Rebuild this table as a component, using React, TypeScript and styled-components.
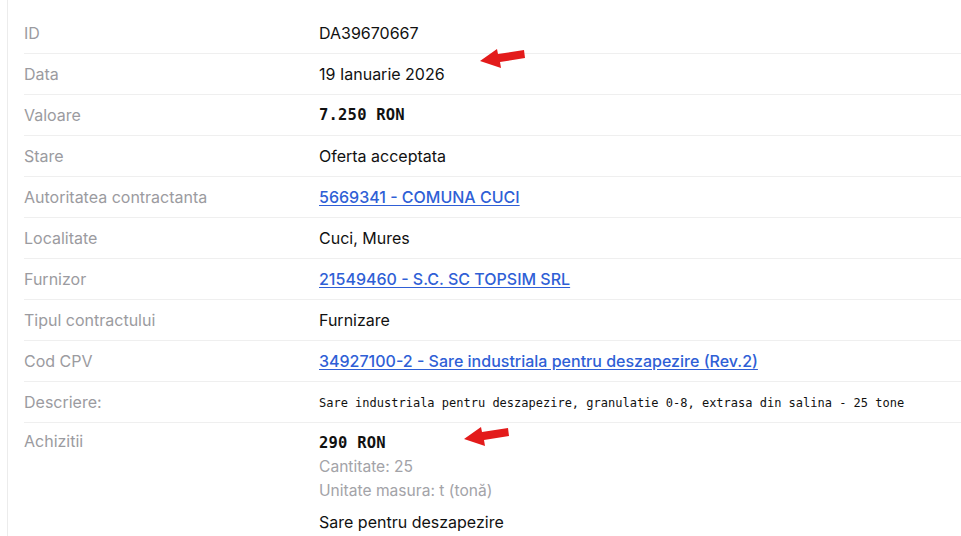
import React from "react";
import styled, { createGlobalStyle } from "styled-components";

const Global = createGlobalStyle`
  html, body { margin: 0; padding: 0; background: #fff; }
  body { font-family: Inter, "Noto Sans", sans-serif; color: #111; }
`;

const Page = styled.div`
  position: relative;
  width: 961px;
  height: 536px;
  overflow: hidden;
  background: #fff;
`;

const Panel = styled.div`
  margin-left: 7px;
  border-left: 1px solid #ececec;
  padding: 13px 0 0 16px;
  min-height: 600px;
`;

const Row = styled.div<{ $tall?: boolean }>`
  display: grid;
  grid-template-columns: 295px 1fr;
  align-items: ${p => (p.$tall ? "start" : "center")};
  min-height: 39px;
  border-bottom: ${p => (p.$tall ? "none" : "1px solid #efefef")};
  padding-top: ${p => (p.$tall ? "7px" : "0")};
  padding-bottom: ${p => (p.$tall ? "0" : "1px")};
`;

const Label = styled.div`
  font-size: 16px;
  color: #9b9ba0;
  line-height: 22px;
`;

const Value = styled.div`
  font-size: 16px;
  color: #111;
  line-height: 22px;
`;

const Mono = styled.span<{ $small?: boolean }>`
  font-family: "DejaVu Sans Mono", "Liberation Mono", monospace;
  font-size: ${p => (p.$small ? "12px" : "15.5px")};
  font-weight: ${p => (p.$small ? 400 : 700)};
  letter-spacing: ${p => (p.$small ? "0" : "0.2px")};
`;

const Link = styled.a`
  color: #2f5fd6;
  text-decoration: underline;
  text-underline-offset: 2px;
  font-weight: 500;
`;

const Stack = styled.div`
  display: flex;
  flex-direction: column;
`;

const Line = styled.div<{ $muted?: boolean; $gap?: boolean }>`
  font-size: ${p => (p.$muted ? "15.6px" : "16px")};
  line-height: 24px;
  color: ${p => (p.$muted ? "#a3a3a8" : "#111")};
  margin-top: ${p => (p.$gap ? "7px" : "0")};
`;

const Arrow = styled.svg<{ $x: number; $y: number }>`
  position: absolute;
  left: ${p => p.$x}px;
  top: ${p => p.$y}px;
`;

const RedArrow = ({ x, y }: { x: number; y: number }) => (
  <Arrow $x={x} $y={y} width="48" height="22" viewBox="0 0 48 22">
    <polygon points="1,14 18,2 19,7 45,3 46,11 21,15 22,21" fill="#e31b1b" />
  </Arrow>
);

const rows: { label: string; value: React.ReactNode }[] = [
  { label: "ID", value: "DA39670667" },
  { label: "Data", value: "19 Ianuarie 2026" },
  { label: "Valoare", value: <Mono>7.250 RON</Mono> },
  { label: "Stare", value: "Oferta acceptata" },
  { label: "Autoritatea contractanta", value: <Link href="#">5669341 - COMUNA CUCI</Link> },
  { label: "Localitate", value: "Cuci, Mures" },
  { label: "Furnizor", value: <Link href="#">21549460 - S.C. SC TOPSIM SRL</Link> },
  { label: "Tipul contractului", value: "Furnizare" },
  { label: "Cod CPV", value: <Link href="#">34927100-2 - Sare industriala pentru deszapezire (Rev.2)</Link> },
  {
    label: "Descriere:",
    value: <Mono $small>Sare industriala pentru deszapezire, granulatie 0-8, extrasa din salina - 25 tone</Mono>,
  },
];

export default function App() {
  return (
    <Page>
      <Global />
      <Panel>
        {rows.map(r => (
          <Row key={r.label}>
            <Label>{r.label}</Label>
            <Value>{r.value}</Value>
          </Row>
        ))}
        <Row $tall>
          <Label>Achizitii</Label>
          <Stack>
            <Line><Mono>290 RON</Mono></Line>
            <Line $muted>Cantitate: 25</Line>
            <Line $muted>Unitate masura: t (tonă)</Line>
            <Line $gap>Sare pentru deszapezire</Line>
          </Stack>
        </Row>
      </Panel>
      <RedArrow x={479} y={47} />
      <RedArrow x={463} y={425} />
    </Page>
  );
}
